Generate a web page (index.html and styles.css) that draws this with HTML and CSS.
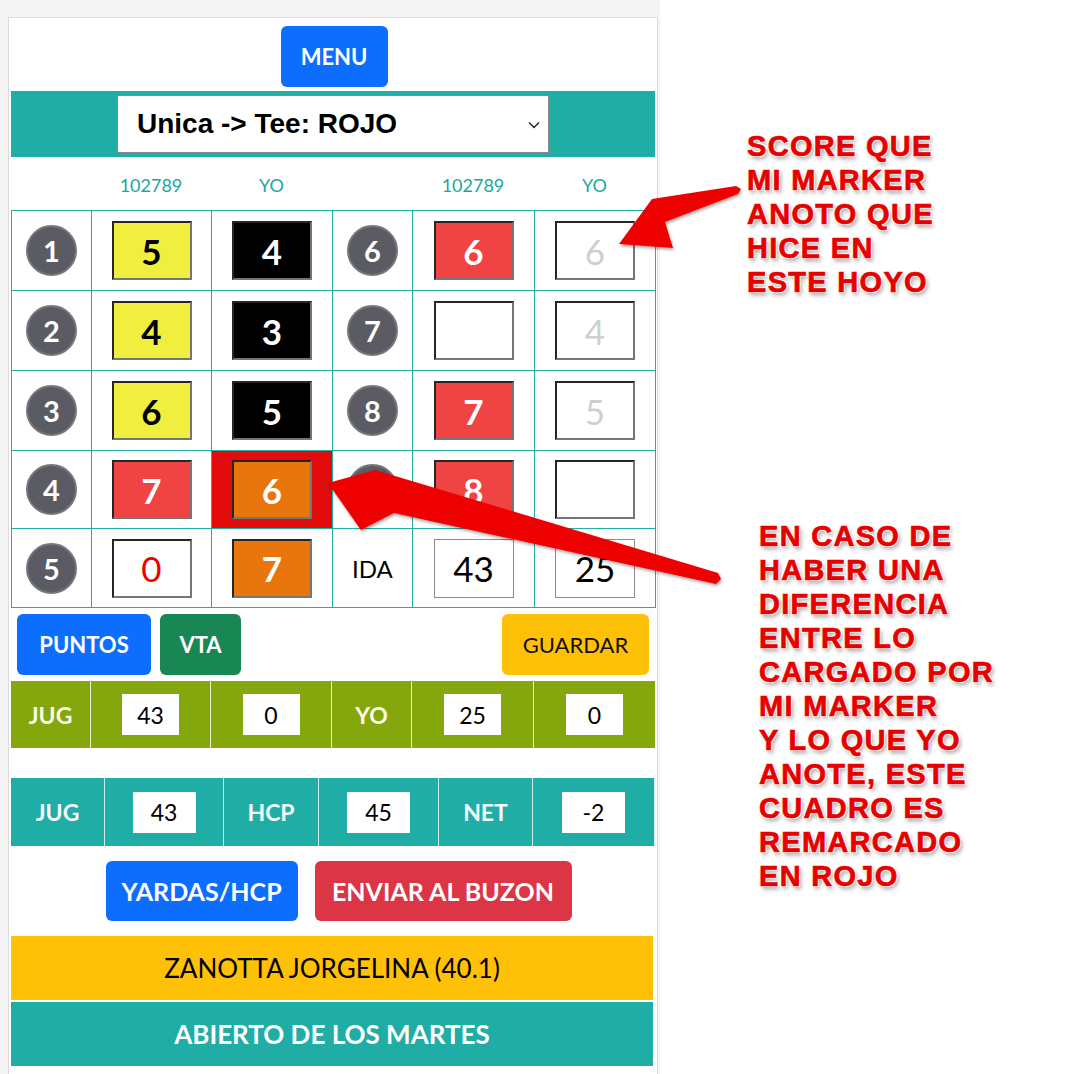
FILE: index.html
```html
<!DOCTYPE html>
<html lang="es">
<head>
<meta charset="utf-8">
<title>Tarjeta</title>
<link rel="stylesheet" href="styles.css">
</head>
<body>
<div class="page">
  <div class="phone">
    <div class="card">
      <div class="menu-row"><div class="btn btn-blue menu">MENU</div></div>
      <div class="tee-band">
        <div class="select">
          <span>Unica -&gt; Tee: ROJO</span>
          <svg class="chev" width="12" height="8" viewBox="0 0 12 8"><path d="M1 1.5 L6 6.5 L11 1.5" fill="none" stroke="#222" stroke-width="1.4"/></svg>
        </div>
      </div>
      <div class="heads">
        <div></div><div>102789</div><div>YO</div><div></div><div>102789</div><div>YO</div>
      </div>
      <div class="grid">
        <div class="cell"><span class="hole">1</span></div>
        <div class="cell"><span class="sb yellow">5</span></div>
        <div class="cell"><span class="sb black">4</span></div>
        <div class="cell"><span class="hole">6</span></div>
        <div class="cell"><span class="sb red">6</span></div>
        <div class="cell"><span class="sb white faint">6</span></div>

        <div class="cell"><span class="hole">2</span></div>
        <div class="cell"><span class="sb yellow">4</span></div>
        <div class="cell"><span class="sb black">3</span></div>
        <div class="cell"><span class="hole">7</span></div>
        <div class="cell"><span class="sb white"></span></div>
        <div class="cell"><span class="sb white faint">4</span></div>

        <div class="cell"><span class="hole">3</span></div>
        <div class="cell"><span class="sb yellow">6</span></div>
        <div class="cell"><span class="sb black">5</span></div>
        <div class="cell"><span class="hole">8</span></div>
        <div class="cell"><span class="sb red">7</span></div>
        <div class="cell"><span class="sb white faint">5</span></div>

        <div class="cell"><span class="hole">4</span></div>
        <div class="cell"><span class="sb red">7</span></div>
        <div class="cell alert"><span class="sb orange">6</span></div>
        <div class="cell"><span class="hole">9</span></div>
        <div class="cell"><span class="sb red">8</span></div>
        <div class="cell"><span class="sb white"></span></div>

        <div class="cell"><span class="hole">5</span></div>
        <div class="cell"><span class="sb white redtext">0</span></div>
        <div class="cell"><span class="sb orange">7</span></div>
        <div class="cell ida">IDA</div>
        <div class="cell"><span class="tot">43</span></div>
        <div class="cell"><span class="tot">25</span></div>
      </div>

      <div class="actions">
        <div class="btn btn-blue puntos">PUNTOS</div>
        <div class="btn btn-green vta">VTA</div>
        <div class="btn btn-yellow guardar">GUARDAR</div>
      </div>

      <div class="band olive">
        <div class="bc lbl">JUG</div>
        <div class="bc"><span class="inp">43</span></div>
        <div class="bc"><span class="inp">0</span></div>
        <div class="bc lbl">YO</div>
        <div class="bc"><span class="inp">25</span></div>
        <div class="bc"><span class="inp">0</span></div>
      </div>

      <div class="band teal">
        <div class="bc lbl">JUG</div>
        <div class="bc"><span class="inp wide">43</span></div>
        <div class="bc lbl">HCP</div>
        <div class="bc"><span class="inp wide">45</span></div>
        <div class="bc lbl">NET</div>
        <div class="bc"><span class="inp wide">-2</span></div>
      </div>

      <div class="actions2">
        <div class="btn btn-blue yardas">YARDAS/HCP</div>
        <div class="btn btn-red enviar">ENVIAR AL BUZON</div>
      </div>

      <div class="strip strip-yellow">ZANOTTA JORGELINA (40.1)</div>
      <div class="strip strip-teal">ABIERTO DE LOS MARTES</div>
    </div>
  </div>

  <div class="notes">
    <p class="note note1">SCORE QUE<br>MI MARKER<br>ANOTO QUE<br>HICE EN<br>ESTE HOYO</p>
    <p class="note note2">EN CASO DE<br>HABER UNA<br>DIFERENCIA<br>ENTRE LO<br>CARGADO POR<br>MI MARKER<br>Y LO QUE YO<br>ANOTE, ESTE<br>CUADRO ES<br>REMARCADO<br>EN ROJO</p>
  </div>

  <svg class="arrows" width="1092" height="1074" viewBox="0 0 1092 1074">
    <defs>
      <filter id="sh" x="-10%" y="-10%" width="130%" height="130%">
        <feDropShadow dx="1" dy="2" stdDeviation="1.5" flood-color="#000" flood-opacity="0.35"/>
      </filter>
    </defs>
    <polygon filter="url(#sh)" fill="#ee0000" points="619,244 652,199 736,186 741,189 738,194 665,222 673,248"/>
    <polygon filter="url(#sh)" fill="#ee0000" points="328,483 375,470 718,573 721,579 716,584 394,513 361,530"/>
  </svg>
</div>
</body>
</html>
```

FILE: styles.css
```css
* { box-sizing: border-box; }
html, body { margin: 0; padding: 0; }
body { background: #ffffff; font-family: Lato, "Noto Sans", sans-serif; }

.page { position: relative; display: flex; width: 1092px; height: 1074px; overflow: hidden; }

.phone { width: 660px; flex: 0 0 660px; background: #f4f4f4; padding: 17px 0 0 8px; }

.card {
  width: 650px;
  height: 1100px;
  background: #fff;
  border: 1px solid #dcdcdc;
  padding: 0 2px;
}

.menu-row { display: flex; justify-content: center; padding-top: 8px; }

.btn {
  display: flex; align-items: center; justify-content: center;
  border-radius: 6px;
  font-weight: 700;
  font-size: 22px;
  color: #fff;
}
.btn-blue { background: #0d6efd; }
.btn-green { background: #198754; }
.btn-yellow { background: #ffc107; color: #111; font-weight: 400; }
.btn-red { background: #dc3545; }

.menu { width: 107px; height: 61px; margin-left: 2px; }

.tee-band {
  margin-top: 4px;
  height: 66px;
  background: #20ada5;
  padding: 4px 0 0 106px;
}
.select {
  width: 432px; height: 58px;
  background: #fff;
  border: 1px solid #8a8a8a;
  display: flex; align-items: center; justify-content: space-between;
  padding: 0 8px 0 19px;
  font-family: "Liberation Sans", Arial, sans-serif;
  font-weight: 700;
  font-size: 28px;
  color: #000;
}
.chev { margin-top: 2px; }

.heads {
  display: grid;
  grid-template-columns: 80px 120px 121px 80px 122px 121px;
  height: 53px;
  align-items: center;
  text-align: center;
  color: #23a69e;
  font-size: 18px;
  padding-top: 2px;
}

.grid {
  display: grid;
  grid-template-columns: 80px 120px 121px 80px 122px 121px;
  grid-template-rows: 80px 80px 80px 78px 79px;
  border-top: 1px solid #1fafa6;
  border-left: 1px solid #1fafa6;
  width: 645px;
}
.cell {
  border-right: 1px solid #1fafa6;
  border-bottom: 1px solid #1fafa6;
  display: flex; align-items: center; justify-content: center;
}
.cell.alert { background: #e30b0b; }
.cell.ida { font-size: 24px; color: #000; font-weight: 400; }

.hole {
  width: 51px; height: 51px;
  border-radius: 50%;
  background: #5b5b63;
  border: 2px solid #76767c;
  color: #fff;
  font-weight: 700;
  font-size: 29px;
  display: flex; align-items: center; justify-content: center;
}

.sb {
  width: 80px; height: 59px;
  border-top: 2px solid #262626;
  border-left: 2px solid #262626;
  border-bottom: 2px solid #767676;
  border-right: 2px solid #767676;
  display: flex; align-items: center; justify-content: center;
  font-size: 35px;
  font-weight: 700;
}
.sb.yellow { background: #f0ee3e; color: #000; }
.sb.black { background: #000; color: #fff; }
.sb.red { background: #f04343; color: #fff; }
.sb.orange { background: #e8760c; color: #fff; }
.sb.white { background: #fff; color: #000; }
.sb.faint { color: #cfcfcf; font-weight: 400; }
.sb.redtext { color: #ee0000; font-weight: 400; }

.tot {
  width: 80px; height: 59px;
  border: 1px solid #8c8c8c;
  display: flex; align-items: center; justify-content: center;
  font-size: 35px;
  color: #000;
}

.actions {
  display: flex;
  gap: 9px;
  padding: 0 6px;
  margin-top: 6px;
  height: 61px;
}
.puntos { width: 134px; }
.vta { width: 81px; }
.guardar { width: 147px; margin-left: auto; }

.band {
  display: grid;
  height: 67px;
  margin-top: 6px;
}
.band.olive {
  background: #85a70d;
  grid-template-columns: 80px 120px 121px 80px 122px 121px;
}
.band.teal {
  background: #20ada5;
  margin-top: 30px;
  height: 68px;
  grid-template-columns: 94px 119px 95px 120px 94px 122px;
}
.bc {
  display: flex; align-items: center; justify-content: center;
  border-right: 1px solid #e6eed0;
}
.band.teal .bc { border-right: 1px solid #d0ecea; }
.bc:last-child { border-right: none; }
.bc.lbl { color: #fbfbe8; font-weight: 700; font-size: 23px; }
.band.teal .bc.lbl { color: #f4fbfa; }

.inp {
  width: 57px; height: 41px;
  background: #fff;
  display: flex; align-items: center; justify-content: center;
  font-size: 23px;
  color: #000;
}
.inp.wide { width: 63px; }

.actions2 {
  display: flex;
  justify-content: center;
  gap: 17px;
  margin-top: 15px;
  height: 60px;
  padding-left: 11px;
}
.yardas { width: 192px; font-size: 25px; }
.enviar { width: 257px; font-size: 25px; }

.strip {
  display: flex; align-items: center; justify-content: center;
  height: 64px;
  font-size: 26px;
  width: 642px;
}
.strip-yellow { background: #ffc107; color: #000; margin-top: 15px; }
.strip-teal { background: #20ada5; color: #fff; margin-top: 2px; font-weight: 700; }

.notes { flex: 1; padding-top: 129px; }
.note {
  margin: 0;
  font-family: "Liberation Sans", Arial, sans-serif;
  font-weight: 700;
  font-size: 29px;
  line-height: 34px;
  letter-spacing: 1.3px;
  color: #e60000;
  -webkit-text-stroke: 0.7px #e60000;
  text-shadow: 1px 1px 0 #fff, -1px -1px 0 #fff, 1px -1px 0 #fff, -1px 1px 0 #fff, 2px 3px 4px rgba(0,0,0,0.4);
  white-space: nowrap;
}
.note1 { margin-left: 87px; }
.note2 { margin-left: 99px; margin-top: 220px; }

.arrows { position: absolute; left: 0; top: 0; pointer-events: none; }
```
